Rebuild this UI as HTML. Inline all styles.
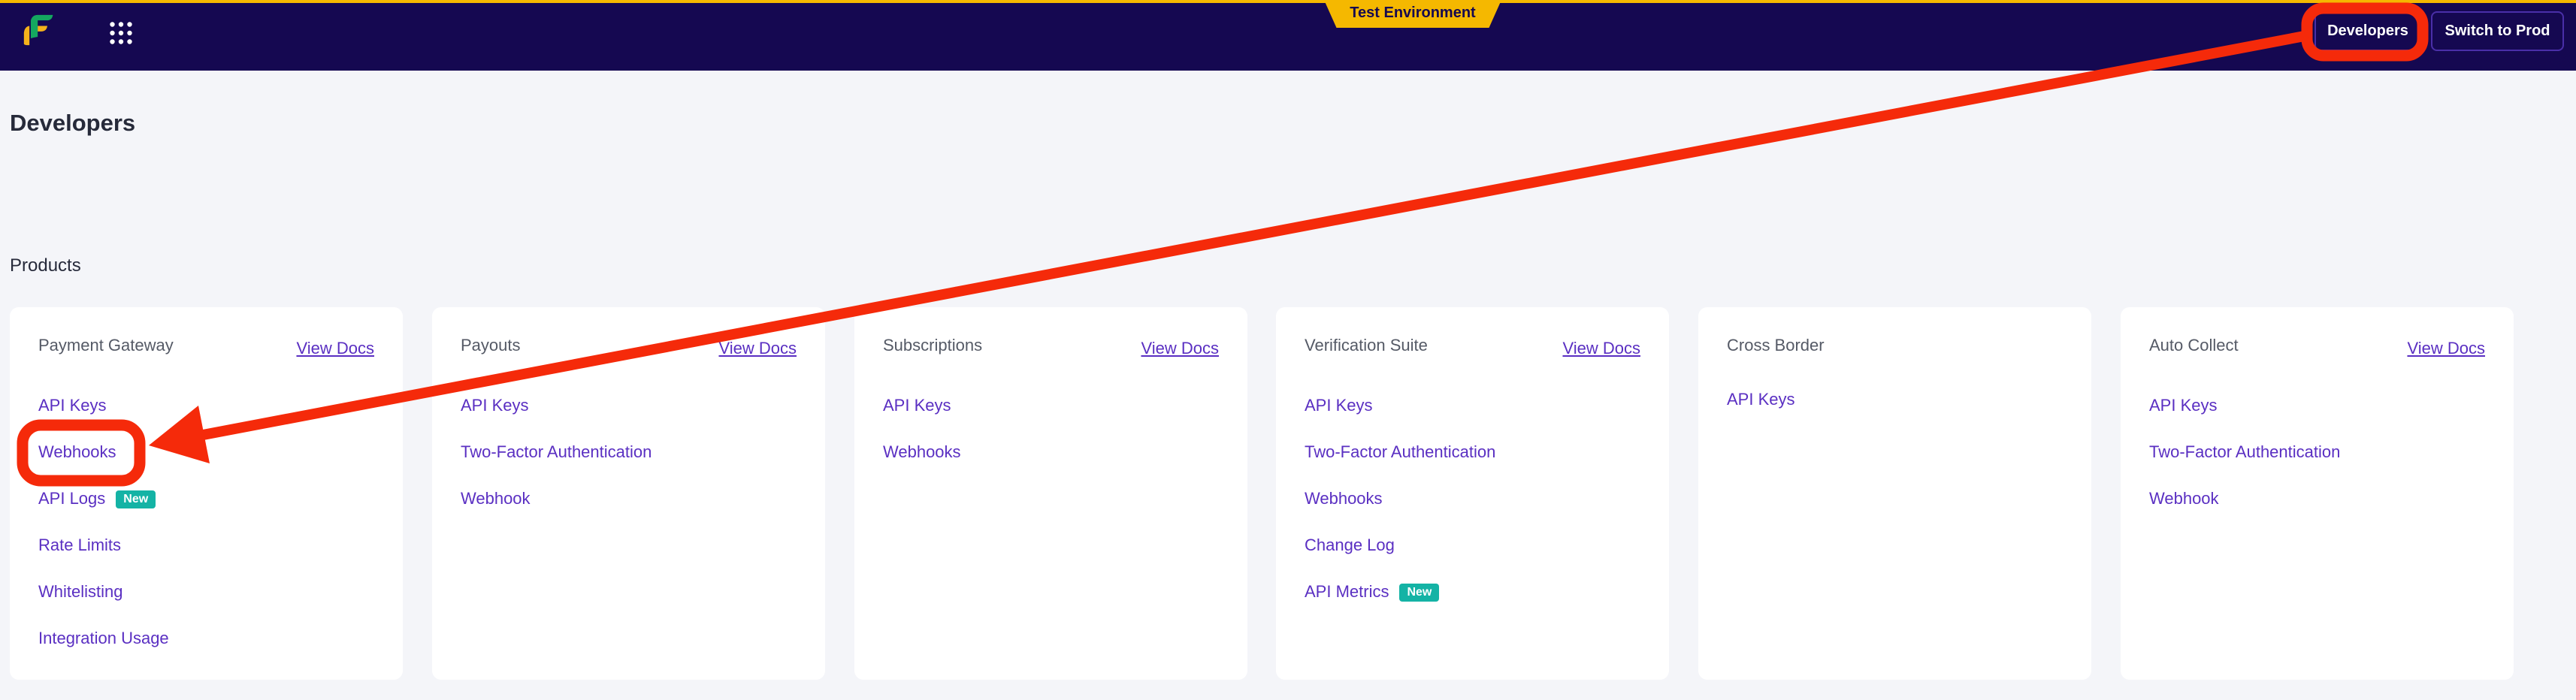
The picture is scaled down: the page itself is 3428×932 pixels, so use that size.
<!DOCTYPE html>
<html><head><meta charset="utf-8"><style>
*{margin:0;padding:0;box-sizing:border-box}
body{width:3428px;height:932px;background:#f4f5f9;font-family:"Liberation Sans",sans-serif;position:relative;overflow:hidden}
.hdr{position:absolute;left:0;top:0;width:3428px;height:94px;background:#150851;border-top:4px solid #f5b800}
.tab{position:absolute;left:1762px;top:0;width:236px;height:37px;background:#f5b800;clip-path:polygon(0 0,100% 0,93% 100%,7% 100%);color:#150851;font-weight:bold;font-size:20px;text-align:center;line-height:34px}
.btn{position:absolute;top:15px;height:53px;border:2px solid #4a2fa8;border-radius:8px;color:#fff;font-weight:bold;font-size:20px;text-align:center;line-height:49px}
h1{position:absolute;left:13px;top:146px;font-size:31px;color:#262a3a;font-weight:bold}
.prod{position:absolute;left:13px;top:340px;font-size:24px;color:#262a3a}
.card{position:absolute;top:409px;width:523px;height:496px;background:#fff;border-radius:12px}
.card .t{position:absolute;left:38px;top:38px;font-size:22px;color:#555a66}
.card .d{position:absolute;right:38px;top:42px;font-size:22px;color:#5a2fc2;text-decoration:underline}
.card .l{position:absolute;left:38px;font-size:22px;color:#5a2fc2}
.new{display:inline-block;margin-left:14px;background:#14b3a5;color:#fff;font-size:16px;font-weight:bold;padding:3px 10px;border-radius:4px;vertical-align:2px}
</style></head><body>
<div class="hdr"></div>
<svg style="position:absolute;left:30px;top:17px" width="44" height="46" viewBox="0 0 48 48">
<path d="M12 10 Q14 2 22 2 H44 Q43 10 35 10 H22 V 34 Q20 34 12 36Z" fill="#14a760"/>
<path d="M2 28 Q3 19 10 18 V46 Q2 46 2 44Z" fill="#f5b21b"/>
<path d="M22 18 H36 Q35 26 27 26 H22Z" fill="#f5b21b"/>
</svg>
<svg style="position:absolute;left:146px;top:29px" width="30" height="30" viewBox="0 0 30 30" fill="#fff">
<circle cx="3.5" cy="3.5" r="3.2"/><circle cx="15" cy="3.5" r="3.2"/><circle cx="26.5" cy="3.5" r="3.2"/>
<circle cx="3.5" cy="15" r="3.2"/><circle cx="15" cy="15" r="3.2"/><circle cx="26.5" cy="15" r="3.2"/>
<circle cx="3.5" cy="26.5" r="3.2"/><circle cx="15" cy="26.5" r="3.2"/><circle cx="26.5" cy="26.5" r="3.2"/>
</svg>
<div class="tab">Test Environment</div>
<div class="btn" style="left:3080px;width:142px">Developers</div>
<div class="btn" style="left:3235px;width:177px">Switch to Prod</div>
<h1>Developers</h1>
<div class="prod">Products</div>

<div class="card" style="left:13px"><div class="t">Payment Gateway</div><div class="d">View Docs</div>
<div class="l" style="top:118px">API Keys</div><div class="l" style="top:180px">Webhooks</div>
<div class="l" style="top:242px">API Logs<span class="new">New</span></div><div class="l" style="top:304px">Rate Limits</div>
<div class="l" style="top:366px">Whitelisting</div><div class="l" style="top:428px">Integration Usage</div></div>

<div class="card" style="left:575px"><div class="t">Payouts</div><div class="d">View Docs</div>
<div class="l" style="top:118px">API Keys</div><div class="l" style="top:180px">Two-Factor Authentication</div>
<div class="l" style="top:242px">Webhook</div></div>

<div class="card" style="left:1137px"><div class="t">Subscriptions</div><div class="d">View Docs</div>
<div class="l" style="top:118px">API Keys</div><div class="l" style="top:180px">Webhooks</div></div>

<div class="card" style="left:1698px"><div class="t">Verification Suite</div><div class="d">View Docs</div>
<div class="l" style="top:118px">API Keys</div><div class="l" style="top:180px">Two-Factor Authentication</div>
<div class="l" style="top:242px">Webhooks</div><div class="l" style="top:304px">Change Log</div>
<div class="l" style="top:366px">API Metrics<span class="new">New</span></div></div>

<div class="card" style="left:2260px"><div class="t">Cross Border</div>
<div class="l" style="top:110px">API Keys</div></div>

<div class="card" style="left:2822px"><div class="t">Auto Collect</div><div class="d">View Docs</div>
<div class="l" style="top:118px">API Keys</div><div class="l" style="top:180px">Two-Factor Authentication</div>
<div class="l" style="top:242px">Webhook</div></div>

<svg style="position:absolute;left:0;top:0" width="3428" height="932">
<rect x="3070" y="11" width="154" height="63" rx="22" fill="none" stroke="#f52a0a" stroke-width="15"/>
<rect x="30" y="566" width="156" height="74" rx="24" fill="none" stroke="#f52a0a" stroke-width="15"/>
<line x1="3072" y1="47" x2="265" y2="580" stroke="#f52a0a" stroke-width="14"/>
<polygon points="198,593 264,540 279,617" fill="#f52a0a"/>
</svg>
</body></html>
